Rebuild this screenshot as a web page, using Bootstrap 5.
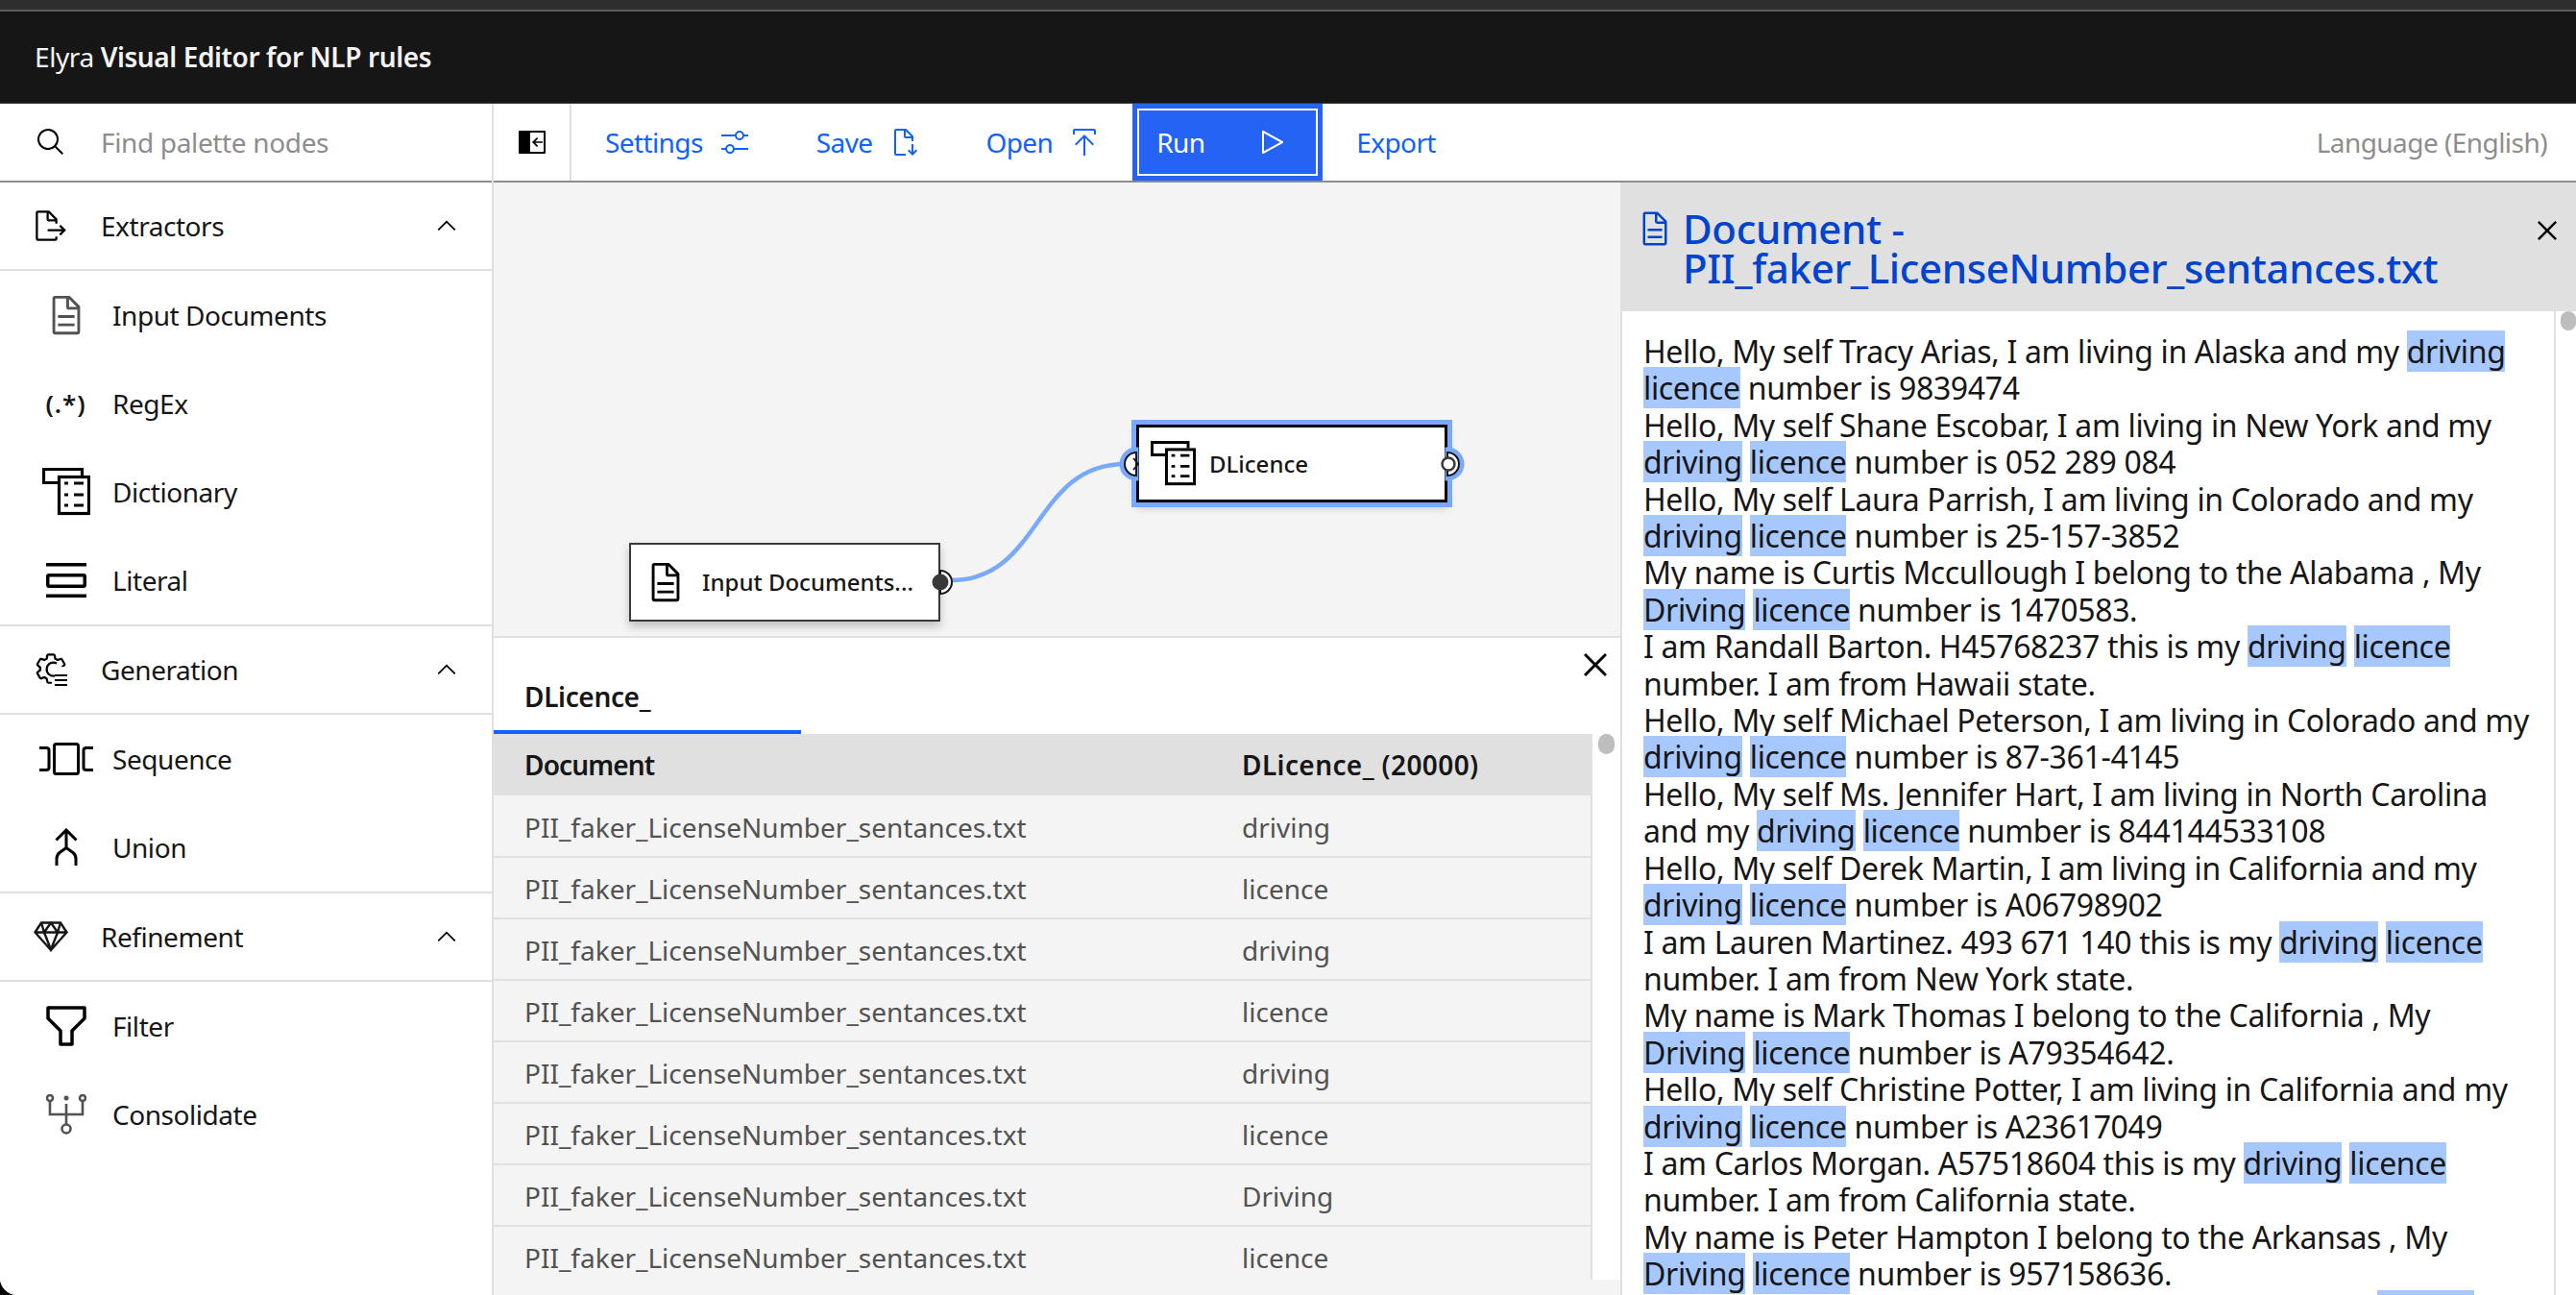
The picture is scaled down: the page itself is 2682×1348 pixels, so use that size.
<!DOCTYPE html>
<html lang="en"><head><meta charset="utf-8"><title>Elyra Visual Editor for NLP rules</title>
<link href="https://cdn.jsdelivr.net/npm/bootstrap@5.3.0/dist/css/bootstrap.min.css" rel="stylesheet">
<style>
html,body{height:100%;margin:0;background:#000}
body{font-family:"Noto Sans",sans-serif;color:#161616;overflow:hidden}
.app{height:1348px;width:2682px;background:#fff;border-bottom-left-radius:18px}
.strip{height:12px;background:#2e2e2e;border-bottom:2px solid #5c5c5c}
.hdr{height:96px;background:#161616;color:#f4f4f4;padding:0 0 2px 36px;font-size:28px;letter-spacing:-.4px;border-bottom:1px solid #393939}
.hdr b{font-weight:600}
.side{width:514px;border-right:2px solid #e0e0e0;flex:none;background:#fff;letter-spacing:-.45px}
.srch{height:82px;border-bottom:2px solid #8d8d8d;gap:0}
.srch .ic{width:105px}
.srch input{border:0;padding:0;font-size:28px;letter-spacing:-.35px;box-shadow:none;color:#161616;background:transparent}
.srch input::placeholder{color:#8d8d8d}
.cat{height:92px;border-bottom:2px solid #e0e0e0;font-size:28px;padding-right:32px}
.cat.sep{height:94px;border-top:2px solid #e0e0e0}
.cat .ic{width:105px}
.item{height:92px;font-size:28px}
.item .ic{width:117px;padding-left:20px}
.ic{display:flex;align-items:center;justify-content:center;flex:none}
.toolbar{height:82px;border-bottom:2px solid #8d8d8d;font-size:28px}
.tgl{width:81px;height:80px;border-right:2px solid #e0e0e0}
.tb{border:0;border-radius:0;height:80px;padding:0 34px 0 35px;color:#0f62fe;font-size:28px;letter-spacing:-.6px;gap:17px;background:transparent}
.tb:hover{color:#0f62fe}
.run{width:198px;height:80px;background:#2563f5;color:#fff;padding:0 32px 0 20px;border:5px solid #2563f5;outline:2px solid #fff;outline-offset:-7px;justify-content:space-between}
.run:hover{background:#2563f5;color:#fff}
.lang{color:#8d8d8d;padding-right:30px;letter-spacing:-.55px}
.canvasx{height:472px;background:#f4f4f4;position:relative;flex:none}
.cnode{position:absolute;background:#fff;box-shadow:0 5px 9px rgba(0,0,0,.22);font-size:24px;font-weight:500;align-items:center;display:flex;white-space:nowrap}
.n1{left:141px;top:375px;width:324px;height:82px;border:2px solid #393939;padding-left:13px;gap:15px}
.n2{left:669px;top:252px;width:324px;height:81px;border:3px solid #000;outline:5px solid #78a9ff;padding-left:12px;gap:14px}
.links{position:absolute;left:0;top:0;width:100%;height:100%;pointer-events:none}
.results{border-top:2px solid #e0e0e0;height:686px;background:#fff;position:relative}
.tabrow{height:100px;position:relative}
.tabx{position:absolute;left:1123px;top:4px}
.tab1{position:absolute;left:0;bottom:0;width:320px;height:64px;border-bottom:4px solid #0f62fe;padding-left:32px;font-size:28px;font-weight:600;letter-spacing:-.35px;line-height:50px}
.tblwrap{height:568px;overflow:hidden;position:relative}
.tblscroll{width:1144px;height:568px;overflow:hidden;border-right:2px solid #e0e0e0}
.restbl{margin:0;table-layout:fixed;width:1143px;font-size:28px;--bs-table-bg:#f4f4f4;--bs-table-color:#525252}
.restbl th{background:#e0e0e0;color:#161616;font-weight:600;letter-spacing:-.85px;height:64px;padding:0 0 0 32px;border:0;vertical-align:middle}
.restbl th:last-child{letter-spacing:.4px}
.restbl td{height:64px;padding:2px 0 0 32px;border-bottom:2px solid #e0e0e0;vertical-align:middle;color:#525252}
.thumb1{position:absolute;right:6px;top:0;width:17px;height:21px;background:#bdbdbd;border-radius:9px}
.tblfoot{height:16px;background:#f4f4f4}
.doc{flex:1 1 0;min-width:0;position:relative;background:#fff}
.dochead{height:134px;background:#e0e0e0;padding:27px 0 0 16px;gap:9px;color:#0043ce;font-size:42px;font-weight:500;letter-spacing:-.35px;line-height:41px;position:relative}
.docx{position:absolute;right:10px;top:30px}
.docbody{height:1024px;overflow:hidden;border-left:2px solid #e0e0e0;position:relative;padding:23px 0 0 22px;font-size:32px;letter-spacing:-.34px;line-height:38.4px;white-space:nowrap}
.docbody mark{background:#a6c8ff;color:inherit;padding:0}
.lane{position:absolute;right:0;top:0;bottom:0;width:23px;border-left:2px solid #e0e0e0;background:#fff}
.thumb2{position:absolute;right:0;top:0;width:16px;height:20px;background:#bdbdbd;border-radius:8px}
.spc{display:inline-block;width:764px}
.fade{position:absolute;left:0;right:0;bottom:0;height:70px;pointer-events:none;background:radial-gradient(ellipse 52% 100% at 50% 100%,rgba(0,0,0,.13),rgba(0,0,0,0))}
</style></head>
<body>
<svg width="0" height="0" class="position-absolute">
<symbol id="i-doc" viewBox="0 0 32 32"><path d="M25.7 9.3l-7-7A.908.908 0 0 0 18 2H8a2.006 2.006 0 0 0-2 2v24a2.006 2.006 0 0 0 2 2h16a2.006 2.006 0 0 0 2-2V10a.908.908 0 0 0-.3-.7zM18 4.4l5.6 5.6H18zM24 28H8V4h8v6a2.006 2.006 0 0 0 2 2h6z"/><path d="M10 22h12v2H10zM10 16h12v2H10z"/></symbol>
<symbol id="i-chev" viewBox="0 0 32 32"><path d="M16 10l10 10-1.4 1.4L16 12.8l-8.6 8.6L6 20z"/></symbol>
<symbol id="i-x" viewBox="0 0 32 32"><path d="M24 9.4L22.6 8 16 14.6 9.4 8 8 9.4 14.6 16 8 22.6 9.4 24 16 17.4 22.6 24 24 22.6 17.4 16 24 9.4z"/></symbol>
<symbol id="i-dict" viewBox="0 0 50 50"><path d="M16 15.5H1.500V1.500H41.500V8" fill="none" stroke="#000" stroke-width="3.200"/><rect x="17.500" y="9.500" width="31" height="38" fill="none" stroke="#000" stroke-width="3.200"/><path d="M23 14.500h4v3h-4zM33 14.500h10v3H33zM23 26.500h4v3h-4zM33 26.500h10v3H33zM23 37.500h4v3h-4zM33 37.500h10v3H33z"/></symbol>
</svg>
<div class="app d-flex flex-column overflow-hidden position-relative">
<div class="strip"></div>
<nav class="navbar hdr d-flex align-items-center"><span>Elyra <b>Visual Editor for NLP rules</b></span></nav>
<div class="d-flex flex-grow-1" style="min-height:0">
<aside class="side">
 <div class="srch d-flex align-items-center"><span class="ic"><svg width="32" height="32" viewBox="0 0 32 32"><path d="M29 27.5859l-7.5521-7.5521a11.0177 11.0177 0 1 0-1.4141 1.4141L27.5859 29ZM4 13a9 9 0 1 1 9 9A9.01 9.01 0 0 1 4 13Z"/></svg></span><input class="form-control" placeholder="Find palette nodes"></div>
 <div class="cat d-flex align-items-center"><span class="ic"><svg width="36" height="36" viewBox="0 0 32 32"><path d="M13 21h13.17l-2.58 2.59L25 25l5-5-5-5-1.41 1.41L26.17 19H13v2z"/><path d="M22 14v-4a.91.91 0 0 0-.3-.7l-7-7A.91.91 0 0 0 14 2H4a2 2 0 0 0-2 2v24a2 2 0 0 0 2 2h16a2 2 0 0 0 2-2v-2h-2v2H4V4h8v6a2 2 0 0 0 2 2h6v2zm-8-4V4.41L19.59 10z"/></svg></span><span>Extractors</span><svg class="ms-auto" width="30" height="30"><use href="#i-chev"/></svg></div>
 <div class="item d-flex align-items-center"><span class="ic"><svg width="46" height="46" fill="#525252"><use href="#i-doc"/></svg></span><span>Input Documents</span></div>
 <div class="item d-flex align-items-center"><span class="ic fw-semibold" style="font-size:26px;letter-spacing:1px">(.*)</span><span>RegEx</span></div>
 <div class="item d-flex align-items-center"><span class="ic"><svg width="50" height="50"><use href="#i-dict"/></svg></span><span>Dictionary</span></div>
 <div class="item d-flex align-items-center"><span class="ic"><svg width="42" height="36" viewBox="0 0 42 36"><path d="M0 0h42v3.500H0zM0 32.500h42V36H0z"/><rect x="1.750" y="12.750" width="38.500" height="11.500" rx="1.500" fill="none" stroke="#000" stroke-width="3.500"/></svg></span><span>Literal</span></div>
 <div class="cat sep d-flex align-items-center"><span class="ic"><svg width="36" height="38" viewBox="0 0 36 38"><g transform="scale(1.130)"><path d="M27 16.76c0-.25 0-.5 0-.76s0-.51 0-.77l1.92-1.68A2 2 0 0 0 29.3 11L26.94 7a2 2 0 0 0-1.73-1 2 2 0 0 0-.64.1l-2.43.82a11.35 11.35 0 0 0-1.31-.75l-.51-2.52a2 2 0 0 0-2-1.61H13.64a2 2 0 0 0-2 1.61l-.51 2.52a11.48 11.48 0 0 0-1.32.75L7.43 6.06A2 2 0 0 0 6.79 6 2 2 0 0 0 5.06 7L2.7 11a2 2 0 0 0 .41 2.51L5 15.24c0 .25 0 .5 0 .76s0 .51 0 .77l-1.92 1.68A2 2 0 0 0 2.7 21l2.36 4a2 2 0 0 0 1.73 1 2 2 0 0 0 .64-.1l2.43-.82a11.35 11.35 0 0 0 1.31.75l.51 2.52a2 2 0 0 0 2 1.61h4.72a2 2 0 0 0 2-1.61l.51-2.52a11.48 11.48 0 0 0 1.32-.75l2.42.82a2 2 0 0 0 .64.1 2 2 0 0 0 1.73-1l2.28-4a2 2 0 0 0-.41-2.51ZM25.21 24l-3.43-1.16a8.86 8.86 0 0 1-2.71 1.57L18.36 28H13.64l-.71-3.55a9.36 9.36 0 0 1-2.7-1.57L6.79 24 4.43 20l2.72-2.4a8.9 8.9 0 0 1 0-3.13L4.43 12 6.79 8l3.43 1.16a8.86 8.86 0 0 1 2.71-1.57L13.64 4h4.72l.71 3.55a9.36 9.36 0 0 1 2.7 1.57L25.21 8l2.36 4-2.72 2.4a8.9 8.9 0 0 1 0 3.13L27.57 20Z"/></g><path d="M19 16h17v22H19z" fill="#fff"/><path d="M24 12.500a7 7 0 1 0 -2 13" fill="none" stroke="#000" stroke-width="2.200"/><path d="M22 24h13v2H22zM22 29h13v2H22zM22 34h13v2H22z"/></svg></span><span>Generation</span><svg class="ms-auto" width="30" height="30"><use href="#i-chev"/></svg></div>
 <div class="item d-flex align-items-center"><span class="ic"><svg width="56" height="34" viewBox="0 0 56 34" fill="none" stroke="#000" stroke-width="3"><path d="M0 5.500h7q3 0 3 2.500v18q0 2.500-3 2.500H0M56 5.500h-7q-3 0-3 2.500v18q0 2.500 3 2.500h7"/><rect x="15.500" y="1.500" width="25" height="31" rx="2"/></svg></span><span>Sequence</span></div>
 <div class="item d-flex align-items-center"><span class="ic"><svg width="24" height="40" viewBox="0 0 24 40" fill="none" stroke="#000" stroke-width="3"><path d="M1.500 12.500L12 2l10.500 10.500M12 2v20M2 39v-7q0-4 3-6.500l7-5 7 5q3 2.500 3 6.500v7"/></svg></span><span>Union</span></div>
 <div class="cat sep d-flex align-items-center"><span class="ic"><svg width="36" height="32" viewBox="0 0 36 32" fill="none" stroke="#161616" stroke-width="2.400"><path d="M8 1.500h20l6.500 10L18 30 1.500 11.500zM1.500 11.500h33M11 11.500l7 18 7-18M8 1.500l3 10 7-10 7 10 3-10"/></svg></span><span>Refinement</span><svg class="ms-auto" width="30" height="30"><use href="#i-chev"/></svg></div>
 <div class="item d-flex align-items-center"><span class="ic"><svg width="42" height="42" viewBox="0 0 42 42" fill="none" stroke="#000" stroke-width="3.500" stroke-linejoin="round"><path d="M2 2h38v11L27 26v14H15V26L2 13z"/></svg></span><span>Filter</span></div>
 <div class="item d-flex align-items-center"><span class="ic"><svg width="42" height="42" viewBox="0 0 42 42" fill="none" stroke="#525252" stroke-width="2.600"><circle cx="4" cy="4" r="3"/><circle cx="38" cy="4" r="3"/><circle cx="21" cy="4" r="2.500" fill="#525252" stroke="none"/><circle cx="21" cy="36" r="4.500"/><path d="M4 8v13h34V8M21 10v21"/></svg></span><span>Consolidate</span></div>
</aside>
<div class="flex-grow-1 d-flex flex-column" style="min-width:0">
 <div class="toolbar d-flex align-items-center">
  <span class="tgl d-flex align-items-center justify-content-center"><svg width="28" height="24" viewBox="0 0 28 24"><path d="M1 0h26a1 1 0 0 1 1 1v22a1 1 0 0 1-1 1H1a1 1 0 0 1-1-1V1a1 1 0 0 1 1-1z"/><path d="M12 2h14v20H12z" fill="#fff"/><path d="M14 12l5-5 1.200 1.200-3 3H25v1.600h-7.800l3 3L19 17z"/></svg></span>
  <button class="btn tb d-flex align-items-center">Settings<svg width="32" height="32" fill="currentColor" viewBox="0 0 32 32"><path d="M30 8h-4.100c-.5-2.300-2.500-4-4.900-4s-4.400 1.700-4.900 4H2v2h14.100c.5 2.300 2.500 4 4.900 4s4.400-1.700 4.900-4H30V8zm-9 4c-1.700 0-3-1.300-3-3s1.300-3 3-3 3 1.300 3 3-1.300 3-3 3zM2 24h4.100c.5 2.300 2.500 4 4.900 4s4.400-1.700 4.900-4H30v-2H15.900c-.5-2.300-2.500-4-4.900-4s-4.400 1.700-4.900 4H2v2zm9-4c1.700 0 3 1.300 3 3s-1.300 3-3 3-3-1.300-3-3 1.300-3 3-3z"/></svg></button>
  <button class="btn tb d-flex align-items-center">Save<svg width="32" height="32" fill="currentColor" viewBox="0 0 32 32"><path d="M30 25l-1.410-1.410L26 26.170V18h-2v8.170l-2.590-2.580L20 25l5 5 5-5z"/><path d="M18 28H8V4h8v6a2 2 0 002 2h6v3h2v-5a.91.91 0 00-.3-.7l-7-7A.91.91 0 0018 2H8a2 2 0 00-2 2v24a2 2 0 002 2h10zm0-23.600l5.600 5.600H18z"/></svg></button>
  <button class="btn tb d-flex align-items-center">Open<svg width="32" height="32" fill="currentColor" viewBox="0 0 32 32"><path d="M6 18L7.410 19.410 15 11.830V30h2V11.830l7.590 7.580L26 18 16 8 6 18zM6 8V4h20v4h2V4a2 2 0 00-2-2H6a2 2 0 00-2 2v4z"/></svg></button>
  <button class="btn tb run d-flex align-items-center">Run<svg width="32" height="32" fill="currentColor" viewBox="0 0 32 32"><path d="M7 28a1 1 0 01-1-1V5a1 1 0 011.480-.88l20 11a1 1 0 010 1.760l-20 11A1 1 0 017 28zM8 6.690v18.620L24.930 16z"/></svg></button>
  <button class="btn tb d-flex align-items-center">Export</button>
  <span class="ms-auto lang">Language (English)</span>
 </div>
 <div class="d-flex flex-grow-1" style="min-height:0">
  <div class="d-flex flex-column" style="width:1173px;flex:none">
   <div class="canvasx">
    <div class="cnode n1"><svg width="46" height="46"><use href="#i-doc"/></svg><span>Input Documents...</span></div>
    <div class="cnode n2"><svg width="47" height="47"><use href="#i-dict"/></svg><span>DLicence</span></div>
    <svg class="links" viewBox="0 0 1173 472">
     <path d="M476 414C571 414 561 293 658 293" fill="none" stroke="#78a9ff" stroke-width="4.500"/>
     <path d="M465 404a12 12 0 0 1 0 24z" fill="#fff" stroke="#161616" stroke-width="2"/><circle cx="465" cy="416" r="8.500" fill="#393939"/>
     <path d="M669 278a15 15 0 0 0 0 30z" fill="#fff" stroke="#78a9ff" stroke-width="5"/><path d="M669 281a12 12 0 0 0 0 24z" fill="#fff" stroke="#161616" stroke-width="2"/><path d="M666 287l5 6-5 6" fill="none" stroke="#161616" stroke-width="1.800"/>
     <path d="M993 278a15 15 0 0 1 0 30z" fill="#fff" stroke="#78a9ff" stroke-width="5"/><path d="M993 281a12 12 0 0 1 0 24z" fill="#fff" stroke="#161616" stroke-width="2"/><circle cx="994" cy="293" r="6.500" fill="#fff" stroke="#393939" stroke-width="2.500"/>
    </svg>
   </div>
   <div class="results">
    <div class="tabrow"><div class="tab1">DLicence_</div><svg class="tabx" width="48" height="48"><use href="#i-x"/></svg></div>
    <div class="tblwrap">
     <div class="tblscroll">
     <table class="table restbl"><colgroup><col style="width:747px"><col></colgroup>
      <thead><tr><th>Document</th><th>DLicence_ (20000)</th></tr></thead>
      <tbody>
      <tr><td>PII_faker_LicenseNumber_sentances.txt</td><td>driving</td></tr>
      <tr><td>PII_faker_LicenseNumber_sentances.txt</td><td>licence</td></tr>
      <tr><td>PII_faker_LicenseNumber_sentances.txt</td><td>driving</td></tr>
      <tr><td>PII_faker_LicenseNumber_sentances.txt</td><td>licence</td></tr>
      <tr><td>PII_faker_LicenseNumber_sentances.txt</td><td>driving</td></tr>
      <tr><td>PII_faker_LicenseNumber_sentances.txt</td><td>licence</td></tr>
      <tr><td>PII_faker_LicenseNumber_sentances.txt</td><td>Driving</td></tr>
      <tr><td>PII_faker_LicenseNumber_sentances.txt</td><td>licence</td></tr>
      </tbody>
     </table></div>
     <div class="thumb1"></div>
    </div>
    <div class="tblfoot"></div>
   </div>
  </div>
  <div class="doc d-flex flex-column">
   <div class="dochead d-flex"><svg class="flex-shrink-0" width="40" height="40" fill="#0043ce" style="margin-top:1px"><use href="#i-doc"/></svg><div>Document -<br>PII_faker_LicenseNumber_sentances.txt</div><svg class="docx" width="40" height="40"><use href="#i-x"/></svg></div>
   <div class="docbody">Hello, My self Tracy Arias, I am living in Alaska and my <mark>driving</mark><br>
<mark>licence</mark> number is 9839474<br>
Hello, My self Shane Escobar, I am living in New York and my<br>
<mark>driving</mark> <mark>licence</mark> number is 052 289 084<br>
Hello, My self Laura Parrish, I am living in Colorado and my<br>
<mark>driving</mark> <mark>licence</mark> number is 25-157-3852<br>
My name is Curtis Mccullough I belong to the Alabama , My<br>
<mark>Driving</mark> <mark>licence</mark> number is 1470583.<br>
I am Randall Barton. H45768237 this is my <mark>driving</mark> <mark>licence</mark><br>
number. I am from Hawaii state.<br>
Hello, My self Michael Peterson, I am living in Colorado and my<br>
<mark>driving</mark> <mark>licence</mark> number is 87-361-4145<br>
Hello, My self Ms. Jennifer Hart, I am living in North Carolina<br>
and my <mark>driving</mark> <mark>licence</mark> number is 844144533108<br>
Hello, My self Derek Martin, I am living in California and my<br>
<mark>driving</mark> <mark>licence</mark> number is A06798902<br>
I am Lauren Martinez. 493 671 140 this is my <mark>driving</mark> <mark>licence</mark><br>
number. I am from New York state.<br>
My name is Mark Thomas I belong to the California , My<br>
<mark>Driving</mark> <mark>licence</mark> number is A79354642.<br>
Hello, My self Christine Potter, I am living in California and my<br>
<mark>driving</mark> <mark>licence</mark> number is A23617049<br>
I am Carlos Morgan. A57518604 this is my <mark>driving</mark> <mark>licence</mark><br>
number. I am from California state.<br>
My name is Peter Hampton I belong to the Arkansas , My<br>
<mark>Driving</mark> <mark>licence</mark> number is 957158636.<br>
<span class="spc"></span><mark>licence</mark>
    <div class="lane"><div class="thumb2"></div></div>
   </div>
  </div>
 </div>
</div>
</div>
<div class="fade"></div>
</div>
</body></html>
